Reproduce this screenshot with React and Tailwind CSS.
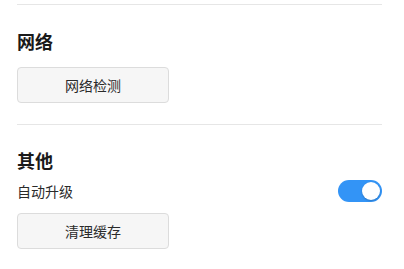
import { useState } from "react";

function Toggle({ on, onChange }) {
  return (
    <button
      onClick={() => onChange(!on)}
      className={
        on
          ? "relative h-[22px] w-[44px] rounded-full bg-[#3394f6]"
          : "relative h-[22px] w-[44px] rounded-full bg-[#c9c9c9]"
      }
    >
      <span
        className={
          on
            ? "absolute right-[2px] top-[2px] h-[18px] w-[18px] rounded-full bg-white shadow-[0_1px_2px_rgba(0,0,0,0.2)]"
            : "absolute left-[2px] top-[2px] h-[18px] w-[18px] rounded-full bg-white shadow-[0_1px_2px_rgba(0,0,0,0.2)]"
        }
      />
    </button>
  );
}

function ActionButton({ children }) {
  return (
    <button className="h-[36px] w-[152px] rounded-[4px] border border-[#dcdcdc] bg-[#f6f6f6] text-[14px] leading-[20px] text-[#2a2a2a]">
      {children}
    </button>
  );
}

export default function App() {
  const [autoUpdate, setAutoUpdate] = useState(true);

  return (
    <div
      className="h-[269px] w-[404px] bg-white pl-[17px] pr-[22px] pt-[4px]"
      style={{ fontFamily: '"Noto Sans CJK SC", "Noto Sans", sans-serif' }}
    >
      {/* 网络 */}
      <div className="border-t border-[#e6e6e6] pt-[24px]">
        <h2 className="text-[18px] font-bold leading-[24px] text-[#1a1a1a]">
          网络
        </h2>
        <div className="mt-[14px]">
          <ActionButton>网络检测</ActionButton>
        </div>
      </div>

      {/* 其他 */}
      <div className="mt-[21px] border-t border-[#e6e6e6] pt-[23px]">
        <h2 className="text-[18px] font-bold leading-[24px] text-[#1a1a1a]">
          其他
        </h2>
        <div className="mt-[8px] flex items-center justify-between">
          <span className="text-[14px] leading-[20px] text-[#2a2a2a]">
            自动升级
          </span>
          <Toggle on={autoUpdate} onChange={setAutoUpdate} />
        </div>
        <div className="mt-[11px]">
          <ActionButton>清理缓存</ActionButton>
        </div>
      </div>
    </div>
  );
}
